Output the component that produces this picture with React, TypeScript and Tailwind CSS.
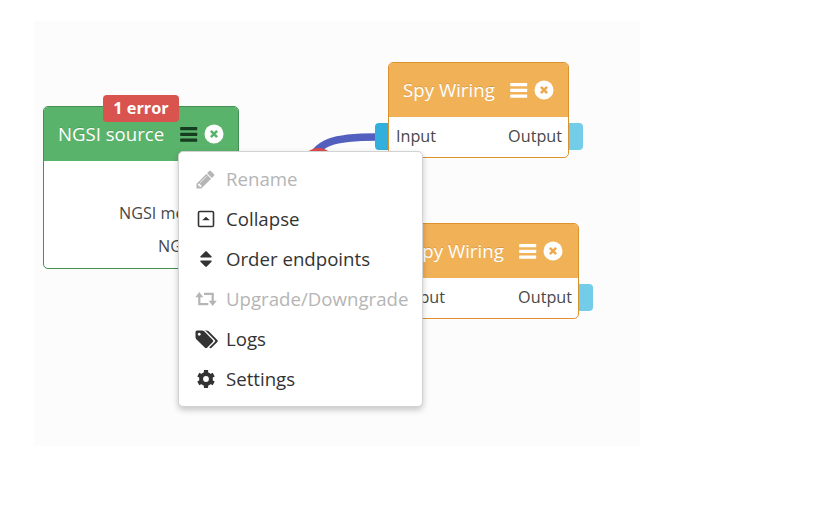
import type { ReactNode } from 'react';

type IconProps = { className?: string; d: string; box?: string };

function Icon({ className = '', d, box = '0 0 1792 1792' }: IconProps) {
  return (
    <svg viewBox={box} className={className} fill="currentColor" aria-hidden="true">
      <path d={d} />
    </svg>
  );
}

const PENCIL =
  'M491 1536l91-91-235-235-91 91v107h128v128h107zm523-928q0-22-22-22-10 0-17 7l-542 542q-7 7-7 17 0 22 22 22 10 0 17-7l542-542q7-7 7-17zm-54-192l416 416-832 832h-416v-416zm683 96q0 53-37 90l-166 166-416-416 166-165q36-38 90-38 53 0 91 38l235 234q37 39 37 91z';
const SORT =
  'M1408 1088q0 26-19 45l-448 448q-19 19-45 19t-45-19l-448-448q-19-19-19-45t19-45 45-19h896q26 0 45 19t19 45zm0-384q0 26-19 45t-45 19h-896q-26 0-45-19t-19-45 19-45l448-448q19-19 45-19t45 19l448 448q19 19 19 45z';
const TAGS =
  'M576 448q0-53-37.5-90.5t-90.5-37.5-90.5 37.5-37.5 90.5 37.5 90.5 90.5 37.5 90.5-37.5 37.5-90.5zm1067 576q0 53-37 90l-491 492q-39 37-91 37-53 0-90-37l-715-716q-38-37-64.5-101t-26.5-117v-416q0-52 38-90t90-38h416q53 0 117 26.5t102 64.5l715 714q37 39 37 91zm384 0q0 53-37 90l-491 492q-39 37-91 37-36 0-59-14t-53-45l470-470q37-37 37-90 0-52-37-91l-715-714q-38-38-102-64.5t-117-26.5h224q53 0 117 26.5t102 64.5l715 714q37 39 37 91z';

function Bars({ className = '' }: { className?: string }) {
  return (
    <svg viewBox="0 0 20 20" className={`size-5 shrink-0 ${className}`} fill="currentColor" aria-hidden="true">
      <rect x="1.2" y="2.9" width="17" height="3.4" rx="0.6" />
      <rect x="1.2" y="8.7" width="17" height="3.4" rx="0.6" />
      <rect x="1.2" y="14.5" width="17" height="3.3" rx="0.6" />
    </svg>
  );
}

function CloseIcon({ cross }: { cross: string }) {
  return (
    <svg viewBox="0 0 22 22" className="ml-[4px] size-[22px] shrink-0" aria-hidden="true">
      <circle cx="11" cy="11" r="9.5" fill="white" />
      <path d="m7.9 7.9 6.2 6.2m0-6.2-6.2 6.2" className={cross} strokeWidth="2.6" fill="none" />
    </svg>
  );
}

function CollapseIcon() {
  return (
    <svg viewBox="0 0 18 18" className="size-[18px]" aria-hidden="true">
      <rect x="1.5" y="1.5" width="15" height="15" rx="1.3" fill="none" stroke="currentColor" strokeWidth="1.6" />
      <path d="M5.2 10.3 9 6.8l3.8 3.5Z" fill="currentColor" />
    </svg>
  );
}

function RetweetIcon() {
  return (
    <svg viewBox="0 0 24 18" className="h-[18px] w-6" aria-hidden="true">
      <path d="M5.3 6v8.2h9M10 3.9h8.7v8.2" fill="none" stroke="currentColor" strokeWidth="2.2" />
      <path d="M5.3 2 9.3 7.2h-8ZM18.7 16l-4-5.2h8Z" fill="currentColor" />
    </svg>
  );
}

function CogIcon() {
  return (
    <svg viewBox="0 0 20 20" className="size-5" fill="none" stroke="currentColor" aria-hidden="true">
      <circle cx="10" cy="10" r="4.9" strokeWidth="4" />
      <path
        d="M10 4.2V1.1M10 15.8v3.1M5 7.1 2.3 5.6M15 12.9l2.7 1.5M5 12.9l-2.7 1.5M15 7.1l2.7-1.5"
        strokeWidth="4.2"
      />
    </svg>
  );
}

function SpyNode({ className }: { className: string }) {
  return (
    <section className={`absolute h-24 rounded-[5px] border border-[#dc922f] bg-white ${className}`}>
      <header className="flex h-[54px] items-center rounded-t-[4px] bg-[#f1b157] pl-[14px] text-[18.7px] text-white">
        <span className="w-[106px] whitespace-nowrap [text-shadow:0_-1px_0_rgba(0,0,0,0.12)]">Spy Wiring</span>
        <Bars />
        <CloseIcon cross="stroke-[#efa94d]" />
      </header>
      <div className="flex h-[38px] items-center justify-between pl-[7px] pr-[6px] text-[16.2px] text-[#484848]">
        <span>Input</span>
        <span>Output</span>
      </div>
      <i className="absolute -left-[14px] top-[60px] h-[27px] w-[13px] rounded-l-[4px] bg-[#31b0dd]" />
      <i className="absolute -right-[15px] top-[60px] h-[27px] w-[14px] rounded-r-[4px] bg-[#73cce8]" />
    </section>
  );
}

function MenuItem({ icon, label, disabled }: { icon: ReactNode; label: string; disabled?: boolean }) {
  return (
    <li className={`flex h-10 items-center ${disabled ? 'text-[#b5b5b5]' : 'text-[#333333]'}`}>
      <span className="flex w-[53px] shrink-0 justify-center [&>svg]:shrink-0">{icon}</span>
      <span className="-ml-[6px] whitespace-nowrap">{label}</span>
    </li>
  );
}

export default function App() {
  return (
    <div className="h-[505px] w-[813px] overflow-hidden bg-white pl-[34px] pt-[21px] font-['Open_Sans','Noto_Sans',sans-serif]">
      <main className="relative h-[425px] w-[606px] bg-[#fcfcfc]">
        <svg className="absolute left-0 top-0 h-full w-full" viewBox="34 21 606 425" fill="none">
          <path d="M308 167C315 141 335 137 377 137" stroke="#525fbe" strokeWidth="7.5" />
          <ellipse cx="318.5" cy="161" rx="15" ry="13" fill="#db4d4b" />
        </svg>

        <section className="absolute left-[9px] top-[85px] h-[163px] w-[196px] rounded-[5px] border border-[#438e52] bg-white">
          <header className="flex h-[54px] items-center rounded-t-[4px] bg-[#5ab36b] pl-[14px] text-[18.6px] text-white">
            <span className="w-[121px] whitespace-nowrap [text-shadow:0_-1px_0_rgba(0,0,0,0.12)]">NGSI source</span>
            <Bars className="text-[#173d20]" />
            <CloseIcon cross="stroke-[#5ab36b]" />
          </header>
          <div className="flex flex-col pt-[36px] text-[16.2px] leading-[33px] text-[#484848]">
            <span className="pl-[75px]">NGSI metadata</span>
            <span className="pl-[114px]">NGSI</span>
          </div>
          <strong className="absolute left-[59px] top-[-12px] flex h-[27px] w-[76px] items-center justify-center rounded-[4px] bg-[#d9534f] text-[16.3px] text-white">
            1 error
          </strong>
        </section>

        <SpyNode className="left-[354px] top-[41px] w-[181px]" />
        <SpyNode className="left-[363px] top-[202px] w-[182px]" />

        <ul className="absolute left-[144px] top-[130px] h-[256px] w-[245px] rounded-[5px] border border-[#d2d2d2] bg-white pt-[7px] text-[18.65px] shadow-[0_3px_6px_rgba(0,0,0,0.22)]">
          <MenuItem disabled label="Rename" icon={<Icon d={PENCIL} className="size-[21px]" />} />
          <MenuItem label="Collapse" icon={<CollapseIcon />} />
          <MenuItem label="Order endpoints" icon={<Icon d={SORT} className="size-[20px]" />} />
          <MenuItem disabled label="Upgrade/Downgrade" icon={<RetweetIcon />} />
          <MenuItem label="Logs" icon={<Icon d={TAGS} box="0 0 2048 1792" className="h-[21px] w-[24px]" />} />
          <MenuItem label="Settings" icon={<CogIcon />} />
        </ul>
      </main>
    </div>
  );
}
